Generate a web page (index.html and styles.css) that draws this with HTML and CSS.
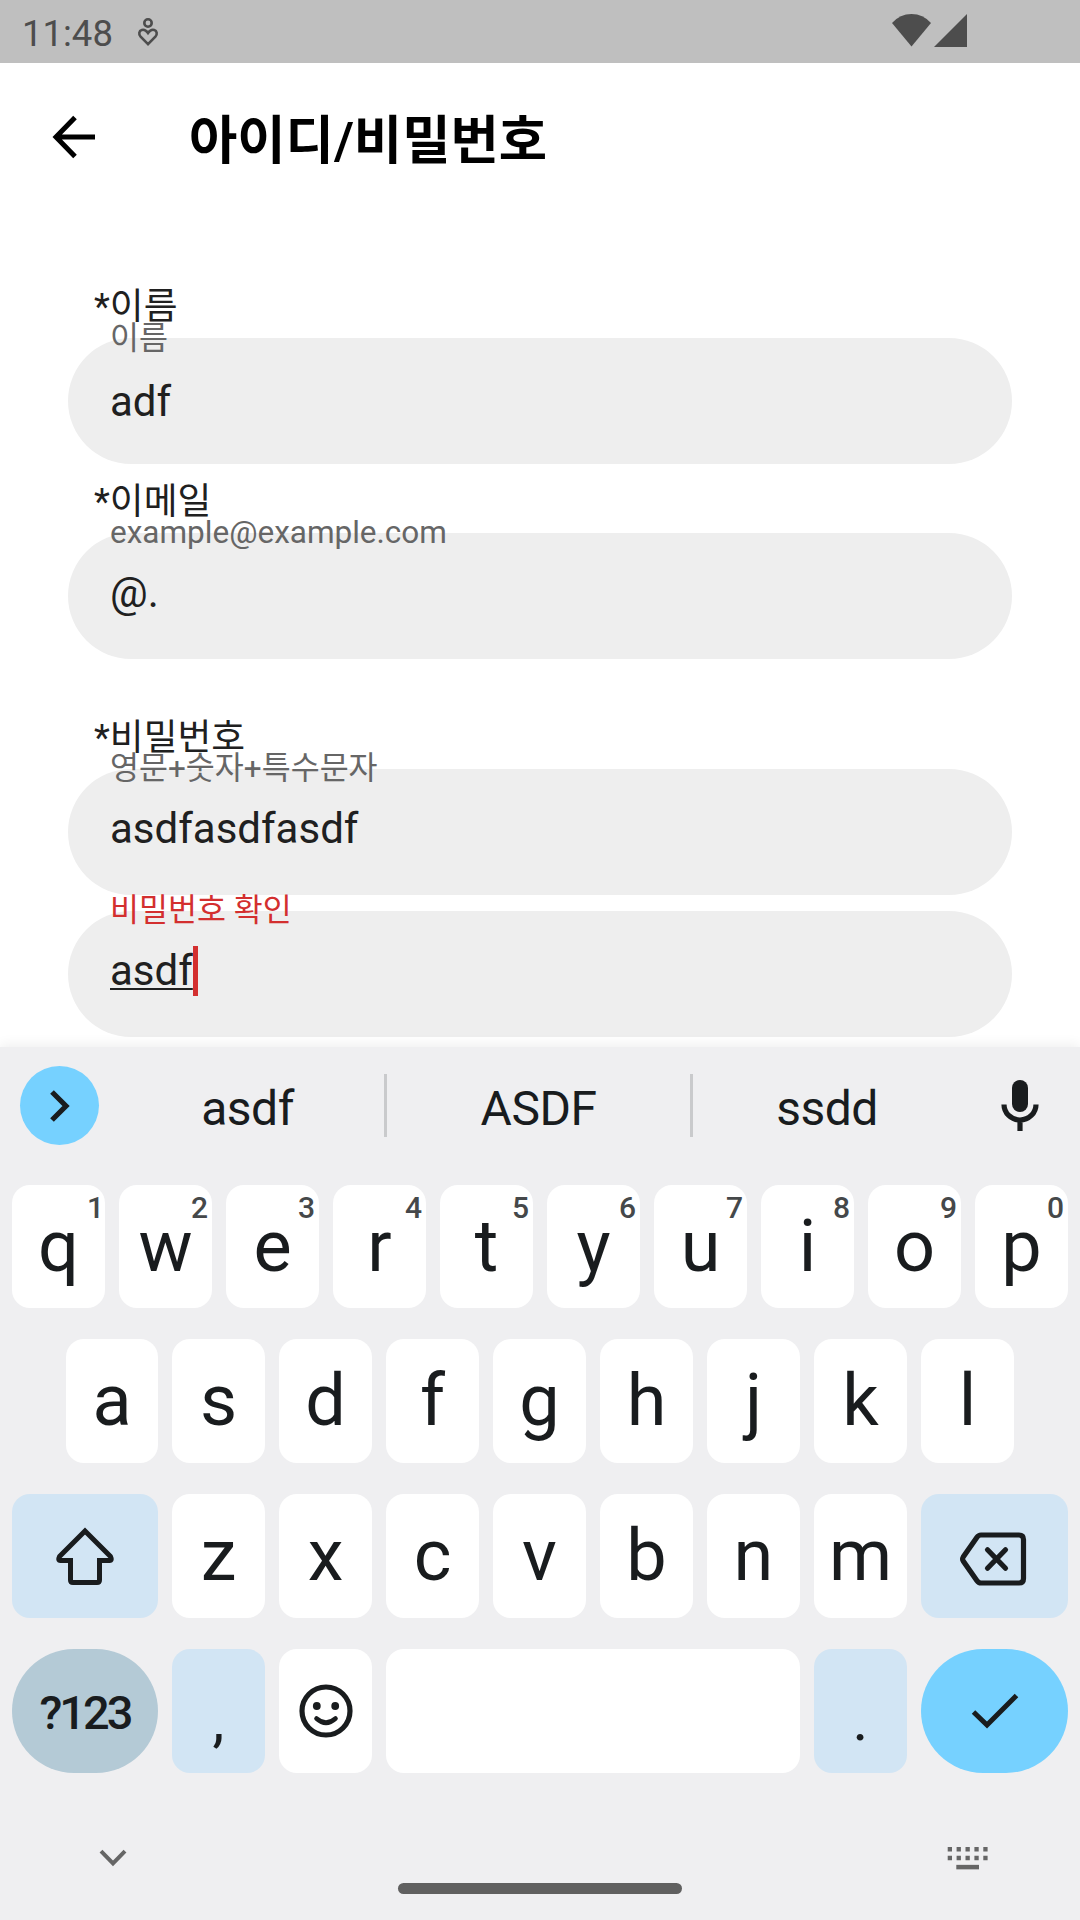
FILE: index.html
```html
<!DOCTYPE html>
<html lang="ko">
<head>
<meta charset="utf-8">
<title>아이디/비밀번호</title>
<link rel="stylesheet" href="styles.css">
</head>
<body>
<div class="screen">
  <header class="status">
    <span class="clock">11:48</span>
    <svg class="heart" width="22" height="28" viewBox="0 0 22 28" fill="none" stroke="#4d4d4d" stroke-width="2.600"><circle cx="11" cy="5" r="3.700"/><path d="M11 26.200 3.600 18.600C1.400 16.200 2 12.800 4.800 12c2.400-.7 4.400.5 6.200 3 1.800-2.500 3.800-3.700 6.200-3 2.800.8 3.400 4.200 1.200 6.600Z"/></svg>
    <svg class="signals" width="76" height="34" viewBox="0 0 76 34" fill="#4d4d4d"><path d="M0 10Q8 1 19.500 1T39 10L19.500 33.500Z"/><path d="M75 1V34H42Z"/></svg>
  </header>

  <nav class="appbar">
    <svg width="44" height="44" viewBox="0 0 44 44" fill="none" stroke="#000" stroke-width="5"><path d="M43 22H5M23 2.500 4 22 23 41.500"/></svg>
    <h1 class="title">아이디/비밀번호</h1>
  </nav>

  <main class="form">
    <section class="group">
      <div class="label">*이름</div>
      <div class="field field-hangul"><span class="hint">이름</span><span class="value">adf</span></div>
    </section>
    <section class="group">
      <div class="label">*이메일</div>
      <div class="field"><span class="hint">example@example.com</span><span class="value">@.</span></div>
    </section>
    <section class="group group-password">
      <div class="label">*비밀번호</div>
      <div class="field"><span class="hint">영문+숫자+특수문자</span><span class="value">asdfasdfasdf</span></div>
      <div class="field field-error"><span class="hint">비밀번호 확인</span><span class="value composing">asdf</span><span class="caret"></span></div>
    </section>
  </main>

  <section class="keyboard">
    <div class="suggestions">
      <div class="expand"><svg width="20" height="32" viewBox="0 0 20 32" fill="none" stroke="#191c1e" stroke-width="5.200"><path d="M2 2 16 16 2 30"/></svg></div>
      <div class="word">asdf</div>
      <div class="word word-mid">ASDF</div>
      <div class="word">ssdd</div>
      <div class="mic"><svg width="38" height="51" viewBox="0 0 38 51"><rect x="11" y="0" width="16" height="32" rx="8" fill="#191c1e"/><path d="M3 24.500a16 15.500 0 0 0 32 0M19 40v11" fill="none" stroke="#191c1e" stroke-width="5.200"/></svg></div>
    </div>

    <div class="row row-top">
      <div class="key">q<sup class="one">1</sup></div><div class="key">w<sup>2</sup></div><div class="key">e<sup>3</sup></div><div class="key">r<sup>4</sup></div><div class="key">t<sup>5</sup></div><div class="key">y<sup>6</sup></div><div class="key">u<sup>7</sup></div><div class="key">i<sup>8</sup></div><div class="key">o<sup>9</sup></div><div class="key">p<sup>0</sup></div>
    </div>
    <div class="row">
      <div class="key key-first">a</div><div class="key">s</div><div class="key">d</div><div class="key">f</div><div class="key">g</div><div class="key">h</div><div class="key">j</div><div class="key">k</div><div class="key">l</div>
    </div>
    <div class="row">
      <div class="key wide tint"><svg width="60" height="58" viewBox="0 0 60 58" fill="none" stroke="#191c1e" stroke-width="5"><path d="M30 4 55.500 29.500Q57.500 33.500 54.500 33.500H44.500V53Q44.500 55.500 42 55.500H18Q15.500 55.500 15.500 53V33.500H5.500Q2.500 33.500 4.500 29.500Z"/></svg></div>
      <div class="key">z</div><div class="key">x</div><div class="key">c</div><div class="key">v</div><div class="key">b</div><div class="key">n</div><div class="key">m</div>
      <div class="key wide-end tint"><svg class="backspace" width="68" height="54" viewBox="0 0 68 54" fill="none" stroke="#191c1e" stroke-width="5.200"><path d="M22 3H60Q64.500 3 64.500 7.500V46.500Q64.500 51 60 51H22Q19.500 51 17.800 48.500L4.200 29Q3 27 4.200 25L17.800 5.500Q19.500 3 22 3Z"/><path d="M28.500 17.800 46.500 36.200M46.500 17.800 28.500 36.200" stroke-linecap="round"/></svg></div>
    </div>
    <div class="row">
      <div class="key wide symbols">?123</div>
      <div class="key tint punct">,</div>
      <div class="key"><svg width="54" height="54" viewBox="0 0 54 54" fill="none" stroke="#191c1e" stroke-width="5.200"><circle cx="27" cy="27" r="24"/><path d="M17.500 34.500Q27 43 36.500 34.500" stroke-width="4.600" stroke-linecap="round"/><circle cx="17.800" cy="22" r="3.900" fill="#191c1e" stroke="none"/><circle cx="36.200" cy="22" r="3.900" fill="#191c1e" stroke="none"/></svg></div>
      <div class="key space"></div>
      <div class="key tint punct">.</div>
      <div class="key wide-end enter"><svg width="48" height="36" viewBox="0 0 48 36" fill="none" stroke="#191c1e" stroke-width="5"><path d="M2.500 19 16 32 45.500 2.500"/></svg></div>
    </div>

    <footer class="navbar">
      <svg class="collapse" width="28" height="18" viewBox="0 0 28 18" fill="none" stroke="#666" stroke-width="4"><path d="M2 2.200 14 14.400 26 2.200"/></svg>
      <div class="home"></div>
      <svg width="42" height="24" viewBox="0 0 42 24" fill="none" stroke="#666" stroke-width="4.500"><path d="M.7 3.200H42M.7 12.100H42" stroke-dasharray="4.300 4.600"/><path d="M9.300 21.100H32"/></svg>
    </footer>
  </section>
</div>
</body>
</html>
```

FILE: styles.css
```css
* { box-sizing: border-box; margin: 0; }
body {
  font-family: Roboto, "Noto Sans CJK KR", sans-serif;
  background: #fff;
  color: #202020;
}
svg { display: block; flex: none; overflow: visible; }
.screen {
  width: 1080px;
  height: 1920px;
  display: flex;
  flex-direction: column;
  overflow: hidden;
}

/* status bar */
.status {
  height: 63px;
  flex: none;
  display: flex;
  align-items: flex-start;
  padding: 0 112px 0 22px;
  background: #bfbfbf;
  color: #4d4d4d;
}
.clock { font-size: 36.5px; line-height: 67px; width: 115px; }
.heart { margin-top: 18px; }
.signals { margin: 13px 0 0 auto; }

/* app bar */
.appbar {
  height: 147px;
  flex: none;
  display: flex;
  align-items: center;
  gap: 93px;
  padding-left: 52px;
}
.title {
  padding-top: 8px;
  font-size: 52.5px;
  line-height: 64px;
  font-weight: 600;
  color: #000;
}

/* form */
.form { padding: 77px 68px 0; height: 837px; flex: none; }
.group { padding-bottom: 18px; }
.group-password { padding-top: 41px; }
.label {
  padding-left: 26px;
  margin-bottom: 12px;
  font-size: 36.75px;
  line-height: 39px;
}
.field {
  position: relative;
  height: 126px;
  display: flex;
  align-items: flex-start;
  padding: 35px 42px 0;
  border-radius: 63px;
  background: #eee;
}
.field + .field { margin-top: 15.500px; }
.field-hangul { padding-top: 39px; }
.hint {
  position: absolute;
  left: 42px;
  top: -16px;
  font-size: 31.5px;
  line-height: 32px;
  color: #666;
}
.field-hangul .hint { top: -15px; }
.value { font-size: 42px; line-height: 50px; }
.field-error .hint { color: #d32f2f; }
.composing {
  text-decoration: underline;
  text-decoration-thickness: 2px;
  text-underline-offset: 3px;
  text-decoration-skip-ink: none;
}
.caret { width: 5px; height: 50px; background: #d32f2f; }

/* keyboard */
.keyboard {
  flex: 1;
  background: #efeff1;
  color: #191c1e;
  box-shadow: 0 -2px 12px rgba(0, 0, 0, .07);
  z-index: 1;
}
.suggestions {
  height: 138px;
  display: flex;
  padding: 19px 41px 0 20px;
}
.expand {
  width: 79px;
  height: 79px;
  display: flex;
  align-items: center;
  justify-content: center;
  border-radius: 50%;
  background: #76d1ff;
}
.word {
  flex: none;
  width: 271px;
  height: 63px;
  margin: 8px 0 0 13px;
  text-align: center;
  font-size: 48px;
  line-height: 70px;
  letter-spacing: -.5px;
}
.word-mid {
  width: 309px;
  margin-left: 1px;
  border: solid #c9cacc;
  border-width: 0 3px;
}
.word-mid + .word { margin-left: 0; width: 268px; }
.mic { margin: 14px 0 0 auto; }
.row {
  height: 124px;
  margin-bottom: 31px;
  display: flex;
  justify-content: center;
  gap: 14px;
}
.row-top { height: 123px; }
.key {
  position: relative;
  width: 93px;
  height: 100%;
  display: flex;
  align-items: center;
  justify-content: center;
  border-radius: 18px;
  background: #fff;
  font-size: 72px;
  line-height: 120px;
}
.key-first { width: 92px; }
.key sup {
  position: absolute;
  top: 7px;
  right: 4px;
  font-size: 30px;
  line-height: 32px;
  font-weight: 500;
  color: #45484a;
}
.key .one { right: 1px; }
.wide { width: 146px; }
.wide-end { width: 147px; }
.tint { background: #d2e5f4; }
.backspace { margin: 5px 3px 0 0; }
.symbols {
  padding-top: 4px;
  border-radius: 62px;
  background: #b4cad6;
  font-size: 47px;
  font-weight: 500;
  letter-spacing: -3px;
}
.punct { font-size: 60px; padding-top: 17px; }
.space { width: 414px; }
.enter { border-radius: 62px; background: #76d1ff; }
.navbar {
  display: flex;
  justify-content: space-between;
  align-items: flex-start;
  padding: 42px 91px 0 99px;
}
.collapse { margin-top: 3px; }
.home {
  width: 284px;
  height: 11px;
  margin: 37px 0 0 5px;
  border-radius: 6px;
  background: #606060;
}
```
